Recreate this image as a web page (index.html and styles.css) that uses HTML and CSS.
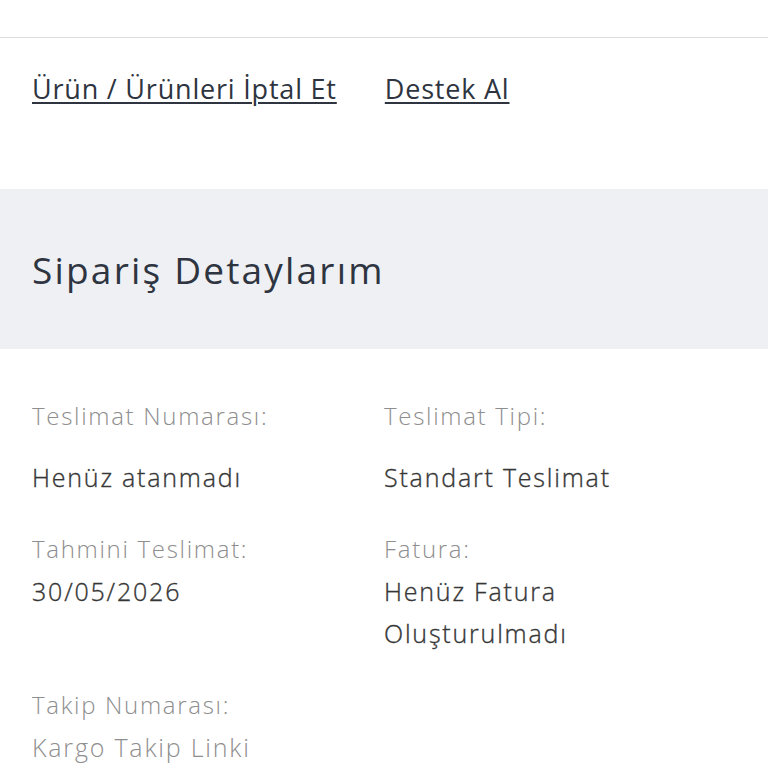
FILE: index.html
```html
<!DOCTYPE html>
<html lang="tr">
<head>
<meta charset="utf-8">
<link rel="stylesheet" href="styles.css">
</head>
<body>
<div class="topbar"></div>
<div class="actions">
  <a class="action" href="#">Ürün / Ürünleri İptal Et</a>
  <a class="action" href="#">Destek Al</a>
</div>
<div class="section-head">
  <h2 class="section-title">Sipariş Detaylarım</h2>
</div>
<div class="details">
  <div class="cell">
    <div class="label">Teslimat Numarası:</div>
    <div class="value spaced">Henüz atanmadı</div>
  </div>
  <div class="cell">
    <div class="label">Teslimat Tipi:</div>
    <div class="value spaced">Standart Teslimat</div>
  </div>
  <div class="cell">
    <div class="label">Tahmini Teslimat:</div>
    <div class="value">30/05/2026</div>
  </div>
  <div class="cell">
    <div class="label">Fatura:</div>
    <div class="value">Henüz Fatura<br>Oluşturulmadı</div>
  </div>
  <div class="cell">
    <div class="label">Takip Numarası:</div>
    <div class="value muted">Kargo Takip Linki</div>
  </div>
</div>
</body>
</html>
```
FILE: styles.css
```css
* { box-sizing: border-box; }
html, body { margin: 0; padding: 0; background: #ffffff; }
body {
  font-family: "Open Sans", "Noto Sans", sans-serif;
  color: #2e3540;
  width: 768px;
  overflow: hidden;
}
.topbar {
  height: 38px;
  border-bottom: 1px solid #dddddd;
}
.actions {
  display: flex;
  gap: 48px;
  padding: 0 32px;
  height: 151px;
  padding-top: 31px;
}
.action {
  font-size: 27px;
  line-height: 40px;
  height: 40px;
  color: #2e3540;
  text-decoration: underline;
  text-decoration-thickness: 2px;
  text-underline-offset: 3px;
  letter-spacing: 0.8px;
}
.section-head {
  background: #eef0f4;
  height: 160px;
  display: flex;
  align-items: center;
  padding: 0 32px;
}
.section-title {
  margin: 0;
  font-weight: 400;
  font-size: 37px;
  color: #2e3540;
  letter-spacing: 2.2px;
}
.details {
  display: grid;
  grid-template-columns: 352px 352px;
  row-gap: 30px;
  padding: 46px 32px 0;
}
.label {
  font-size: 24px;
  line-height: 42px;
  color: #8e8e8e;
  font-weight: 300;
  letter-spacing: 1.7px;
}
.value {
  font-size: 25px;
  line-height: 42px;
  color: #363636;
  font-weight: 300;
  letter-spacing: 1.8px;
  -webkit-text-stroke: 0.35px #363636;
}
.value.spaced { margin-top: 19px; }
.value.muted { color: #8e8e8e; -webkit-text-stroke: 0; }
```
